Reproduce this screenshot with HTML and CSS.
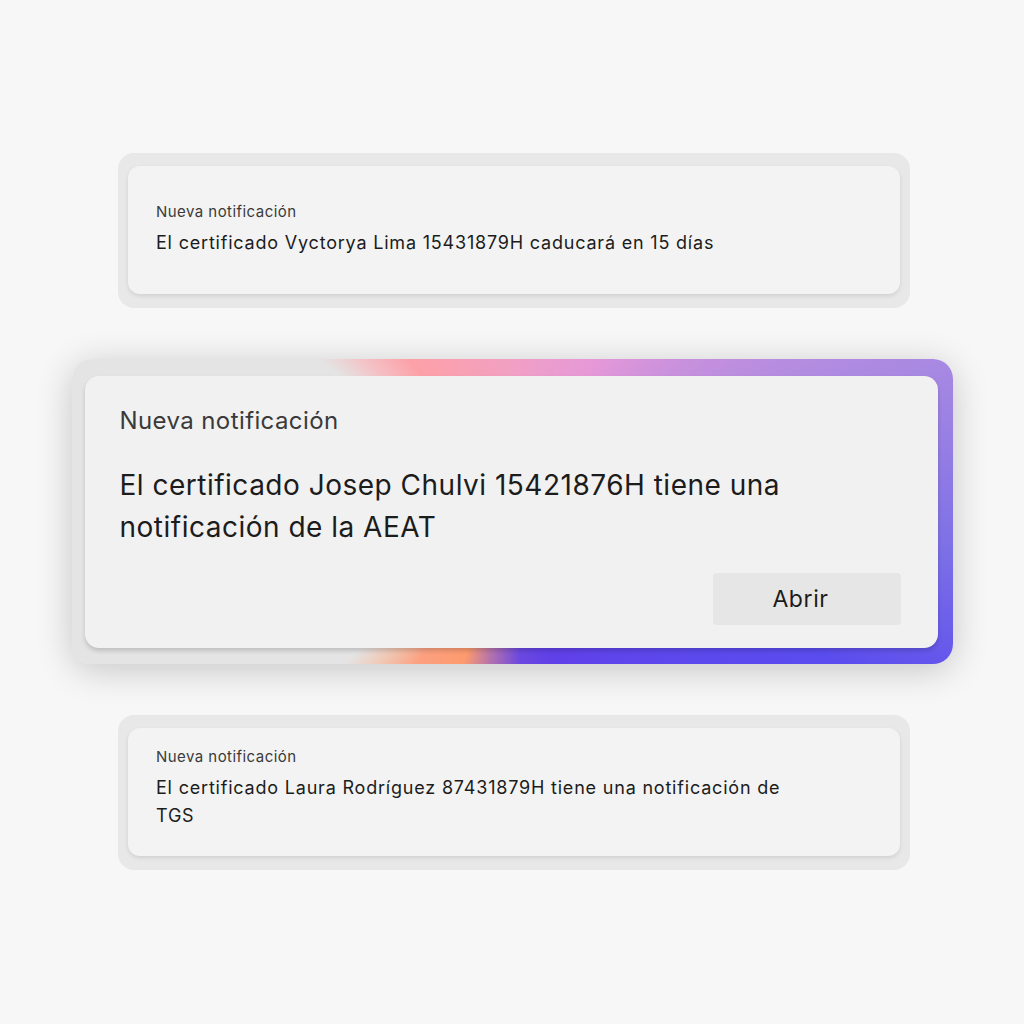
FILE: index.html
```html
<!DOCTYPE html>
<html lang="es">
<head>
<meta charset="utf-8">
<title>Notificaciones</title>
<link rel="stylesheet" href="styles.css">
</head>
<body>
<main class="stack">
  <section class="card card-small card-top">
    <div class="card-inner">
      <p class="label">Nueva notificación</p>
      <p class="msg">El certificado Vyctorya Lima 15431879H caducará en 15 días</p>
    </div>
  </section>
  <section class="card card-main">
    <div class="card-inner main-inner">
      <p class="label label-lg">Nueva notificación</p>
      <p class="msg msg-lg">El certificado Josep Chulvi 15421876H tiene una notificación de la AEAT</p>
      <div class="actions"><button class="btn">Abrir</button></div>
    </div>
  </section>
  <section class="card card-small card-bottom">
    <div class="card-inner">
      <p class="label">Nueva notificación</p>
      <p class="msg">El certificado Laura Rodríguez 87431879H tiene una notificación de TGS</p>
    </div>
  </section>
</main>
</body>
</html>
```
FILE: styles.css
```css
* { box-sizing: border-box; }
html, body { margin: 0; padding: 0; }
body {
  background: #f7f7f7;
  font-family: Inter, "Open Sans", sans-serif;
  color: #1c1c1c;
  width: 1024px;
  height: 1024px;
  overflow: hidden;
}
.stack {
  display: flex;
  flex-direction: column;
  align-items: center;
  padding-top: 153px;
  gap: 51px;
}
p { margin: 0; }
.card-small {
  width: 792px;
  margin-left: 4px;
  background: #e8e8e8;
  border-radius: 16px;
  padding: 13px 10px 14px 10px;
}
.card-small .card-inner {
  background: #f3f3f3;
  border-radius: 12px;
  height: 128px;
  box-shadow: 0 2px 4px rgba(0,0,0,0.10);
  padding: 36px 28px 0 28px;
}
.card-bottom .card-inner { padding-top: 19px; }
.label {
  font-size: 15px;
  line-height: 20px;
  letter-spacing: 0.45px;
  color: #3a3a3a;
  font-weight: 400;
}
.msg {
  margin-top: 7px;
  font-size: 18px;
  line-height: 28px;
  letter-spacing: 0.8px;
  max-width: 640px;
}
.card-main {
  width: 881px;
  height: 305px;
  border-radius: 20px;
  padding: 17px 15px 16px 13px;
  background: conic-gradient(from 0deg at 50% 50%,
    #f1a0c4 0deg,
    #e598d8 30deg,
    #a889e2 71deg,
    #7d70e6 95deg,
    #5a4cee 115deg,
    #6040e8 165deg,
    #6a48e0 177deg,
    #b070b0 188deg,
    #fd9b6e 198deg,
    #fca080 212deg,
    #f0c8b4 221deg,
    #e4e4e4 228deg,
    #e4e4e4 308deg,
    #f4c0c4 316deg,
    #fda0a8 326deg,
    #f1a0c4 360deg);
  box-shadow: 0 6px 36px rgba(0,0,0,0.2);
}
.main-inner {
  background: #f1f1f1;
  border-radius: 14px;
  height: 272px;
  padding: 29px 37px 0 35px;
  box-shadow: 0 3px 4px rgba(0,0,0,0.16);
}
.label-lg {
  font-size: 24px;
  line-height: 32px;
  letter-spacing: 0.4px;
}
.msg-lg {
  margin-top: 27px;
  font-size: 28px;
  line-height: 42px;
  letter-spacing: 0.5px;
  max-width: 720px;
}
.actions {
  margin-top: 25px;
  display: flex;
  justify-content: flex-end;
}
.btn {
  width: 188px;
  height: 52px;
  border: none;
  border-radius: 4px;
  background: #e6e6e6;
  font-family: inherit;
  font-size: 23px;
  letter-spacing: 0.6px;
  color: #1c1c1c;
  padding: 0 12px 0 0;
}
```
